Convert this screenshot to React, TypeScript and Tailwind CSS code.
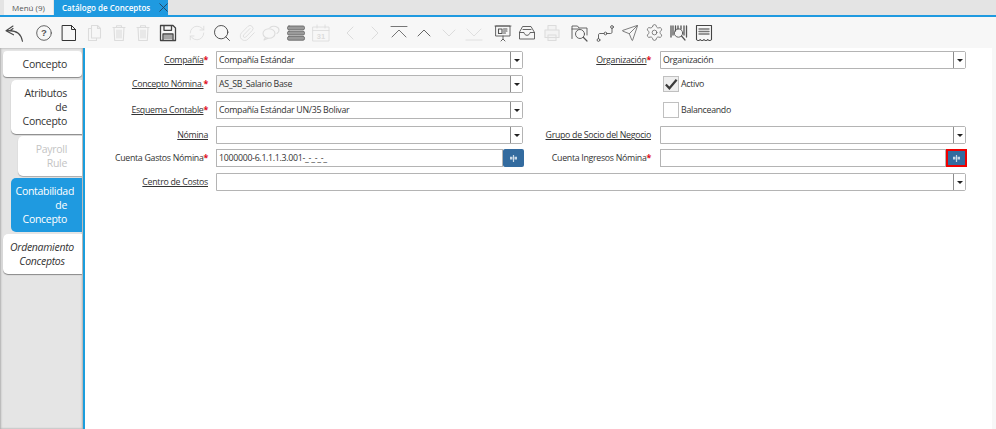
/**
 * Catalogo de Conceptos window: tab strip, toolbar, side tabs and form.
 */
import React from 'react'
import { ChevronLeft, ChevronRight, ChevronUp, ChevronDown, RefreshCw, Search, Paperclip, Settings, Send } from 'lucide-react'

const DARK = '#555555'
const OFF = '#dcdcdc'

function Svg({ children, color = DARK, w = 1 }: { children: React.ReactNode; color?: string; w?: number }) {
  return (
    <svg width="20" height="20" viewBox="0 0 20 20" fill="none" stroke={color} strokeWidth={w} strokeLinecap="round" strokeLinejoin="round">
      {children}
    </svg>
  )
}

function Trash() {
  return (
    <Svg color={OFF} w={1.1}>
      <path d="M4 4.500h12M7.500 4.500V2.800h5v1.700M5 4.500l.7 13h8.600l.7-13M8 7v8M10 7v8M12 7v8" />
    </Svg>
  )
}

const groups: React.ReactNode[][] = [
  [
    <Svg w={1.1} color="#4a4a4a">
      <path d="M9 3 2 7.800l7.500 4M2.500 7.800c8-.8 14.500 2 16 10.500M9 5.500C8 6.500 7 7 5.500 7.800" />
    </Svg>,
  ],
  [
    <Svg w={0.9}>
      <circle cx="10" cy="10" r="7.300" />
      <text x="10" y="13.300" textAnchor="middle" fontSize="9.500" fontWeight="700" fill={DARK} stroke="none" fontFamily="Liberation Sans, sans-serif">?</text>
    </Svg>,
    <Svg color="#333333" w={1}>
      <path d="M3.500 2.500h9l4 4v11h-13zM12.500 2.500v4h4" />
    </Svg>,
    <Svg color={OFF} w={1.1}>
      <path d="M7.500 2.500h6l3 3v9.500h-9zM7.500 5.500h-3v12h8V15M13.500 2.500v3h3" />
    </Svg>,
    <Trash />,
    <Trash />,
    <Svg color="#444444" w={1.3}>
      <path d="M2.500 2.500h12.500l2.500 2.500v12.500h-15zM6 2.800v4.500h7.500V2.800M5 17.200v-6.200h10v6.200" />
      <path d="M6 13h8M6 15h8" strokeWidth="0.900" />
    </Svg>,
  ],
  [
    <RefreshCw size={18} color={OFF} strokeWidth={1.1} />,
    <Search size={20} color="#444444" strokeWidth={1.1} />,
    <Paperclip size={18} color={OFF} strokeWidth={1.2} />,
    <Svg color={OFF} w={1.1}>
      <path d="M9 4.500c3.500-2.500 9-1 9 2.700 0 1.500-.8 2.600-2 3.300" />
      <ellipse cx="8" cy="10.500" rx="6" ry="4.800" />
      <path d="M4.500 14.500 3 17l4-1.800" />
    </Svg>,
    <Svg color="#6a6a6a" w={0.9}>
      <rect x="1.500" y="3" width="17" height="3.800" rx="1.500" fill="#9a9a9a" />
      <rect x="1.500" y="8.200" width="17" height="3.800" rx="1.500" fill="#9a9a9a" />
      <rect x="1.500" y="13.400" width="17" height="3.800" rx="1.500" fill="#9a9a9a" />
    </Svg>,
    <Svg color={OFF} w={0.9}>
      <path d="M2 4h16v14H2zM2 7.500h16M6 2v3M14 2v3" />
      <text x="10" y="15.800" textAnchor="middle" fontSize="7.500" fontWeight="700" fill={OFF} stroke="none" fontFamily="Liberation Sans, sans-serif">31</text>
    </Svg>,
  ],
  [
    <ChevronLeft size={24} color={OFF} strokeWidth={1} />,
    <ChevronRight size={24} color={OFF} strokeWidth={1} />,
    <Svg color="#666666" w={0.9}>
      <path d="M2 3.500h16M3 14l7-7 7 7" />
    </Svg>,
    <ChevronUp size={24} color="#666666" strokeWidth={1} />,
    <ChevronDown size={24} color={OFF} strokeWidth={1} />,
    <Svg color={OFF} w={0.9}>
      <path d="M2 17h16M3 6l7 7 7-7" />
    </Svg>,
  ],
  [
    <Svg color="#555555" w={0.9}>
      <path d="M3 3h14v10H3zM2 3h16M10 13v3M8 18l2-2 2 2" />
      <path d="M5.500 6h3.500v4.500H5.500zM10.500 6h3.500M10.500 8h3.500M10.500 10h2" strokeWidth="1.100" />
    </Svg>,
    <Svg color="#555555" w={0.9}>
      <path d="M6 3.500h8l3.500 6v6.500h-15V9.500zM2.500 9.500h4.500c.5 2 1.500 2.800 3 2.800s2.500-.8 3-2.800h4.500M6 6.500h8" />
    </Svg>,
    <Svg color={OFF} w={1.1}>
      <path d="M6 7V2.500h8V7M3 7h14v7.500H3zM6 12h8v5.500H6z" fill="#f3f3f3" />
    </Svg>,
  ],
  [
    <Svg color="#555555" w={0.9}>
      <path d="M2 15.500V3h5.500l1.500 2h8v7" />
      <path d="M2 6h7" />
      <circle cx="10" cy="11" r="4.500" />
      <path d="m13.500 14.500 3.500 3.500" strokeWidth="1.200" />
    </Svg>,
    <Svg color="#555555" w={0.9}>
      <circle cx="3.500" cy="17" r="1.400" />
      <circle cx="10.500" cy="10.500" r="1.400" />
      <circle cx="17" cy="4" r="1.400" />
      <path d="M3.500 15.500v-3.500c0-1 .5-1.500 1.500-1.500h4M12 10.500h3.500c1 0 1.500-.5 1.500-1.500V5.500" />
    </Svg>,
    <Send size={18} color="#555555" strokeWidth={1} />,
    <Settings size={19} color="#666666" strokeWidth={1} />,
    <Svg color="#555555" w={0.9}>
      <path d="M2 3v11M4 3v9M6.500 3v5M9 3v3M12 3v3M15 3v9M17.500 3v11" strokeWidth="1.300" />
      <circle cx="9.500" cy="10" r="4.200" />
      <path d="m12.500 13 3.500 4" strokeWidth="1.200" />
    </Svg>,
    <Svg color="#444444" w={1.1}>
      <path d="M2.500 2.500h15v14c-1.200 1.400-2.500 1.400-3.700 0-1.200 1.400-2.500 1.400-3.800 0-1.300 1.400-2.600 1.400-3.800 0-1.200 1.400-2.500 1.400-3.700 0z" />
      <path d="M5 6h10M5 8.500h10M5 11h10" strokeWidth="1.400" stroke="#777777" />
    </Svg>,
  ],
]

const groupGaps = ['ml-0', 'ml-[5px]', 'ml-[4px]', 'ml-[4px]', 'ml-[4px]', 'ml-[3px]']

function Toolbar() {
  return (
    <div className="flex items-center h-[31px] pl-[2px] bg-[#f7f7f7]">
      {groups.map((icons, g) => (
        <div key={g} className={`flex ${groupGaps[g]}`}>
          {icons.map((icon, i) => (
            <div key={i} className="w-[24.800px] h-[24px] flex items-center justify-center">
              {icon}
            </div>
          ))}
        </div>
      ))}
    </div>
  )
}

function SideTabs() {
  return (
    <div className="w-[83px] shrink-0 pt-[3px] bg-[#e5e5e5] shadow-[inset_1px_0_2px_#b0b0b0,inset_-1px_0_2px_#b0b0b0] text-[10.500px] tracking-[-0.3px] leading-[14px] text-[#333]">
      <div className="ml-[3px] mr-[1px] h-[26px] flex items-center justify-end pr-[15px] bg-white rounded-[4px] shadow-[0_1px_1px_#888]">Concepto</div>
      <div className="ml-[11px] mr-[1px] mt-[3px] h-[54px] pt-[6px] pr-[15px] text-right bg-white rounded-l-[5px] shadow-[0_1px_1px_#888]">
        Atributos
        <br />
        de
        <br />
        Concepto
      </div>
      <div className="ml-[18px] mr-[1px] mt-[2px] h-[40px] pt-[6px] pr-[15px] text-right text-[#c4c4c4] bg-white rounded-l-[5px] shadow-[0_1px_1px_#aaa]">
        Payroll
        <br />
        Rule
      </div>
      <div className="ml-[11px] mr-[1px] mt-[2px] h-[54px] pt-[6px] pr-[15px] text-right text-white bg-[#1f9ae0] rounded-l-[5px]">
        <span className="block -mr-[7px]">Contabilidad</span>
        de
        <br />
        Concepto
      </div>
      <div className="ml-[3px] mr-[1px] mt-[2px] h-[40px] pt-[6px] pr-[1px] text-center italic bg-white rounded-l-[5px] shadow-[0_1px_1px_#888]">
        Ordenamiento
        <br />
        Conceptos
      </div>
    </div>
  )
}

function Label({ text, req, link = true, pr }: { text: string; req?: boolean; link?: boolean; pr: string }) {
  return (
    <div className={`h-[18px] pt-[2px] flex items-center justify-end whitespace-nowrap ${pr}`}>
      <span className={link ? 'underline' : ''}>{text}</span>
      {req && <span className="text-[#e0101a] font-bold">*</span>}
    </div>
  )
}

function Select({ value, readOnly }: { value?: string; readOnly?: boolean }) {
  return (
    <div className={`h-[18px] flex items-stretch border border-[#b4b4b4] rounded-r-[2px] ${readOnly ? 'bg-[#f3f3f3]' : 'bg-white'}`}>
      <div className="flex-1 pl-[2px] pt-[1px] flex items-center whitespace-nowrap overflow-hidden">{value}</div>
      <div className="w-[12px] bg-white border-l border-[#8c8c8c] flex items-center justify-center">
        <div className="w-0 h-0 border-x-[3px] border-x-transparent border-t-[3px] border-t-[#222]" />
      </div>
    </div>
  )
}

function LookupIcon() {
  return (
    <svg width="7" height="7" viewBox="0 0 8 8" fill="#c9d9e8">
      <path d="M3.300 0h1.400v8H3.300zM0 2h2.800v3H0zM5.200 2H8v3H5.200z" />
    </svg>
  )
}

function Check({ label, checked }: { label: string; checked?: boolean }) {
  return (
    <div className="h-[18px] pl-[3px] flex items-center gap-[2px]">
      <div className={`w-[16px] h-[16px] border border-[#c0c0c0] flex items-center justify-center ${checked ? 'bg-[#eeeeee]' : 'bg-white'}`}>
        {checked && (
          <svg width="15" height="13" viewBox="0 0 15 13" fill="none" stroke="#3a3a3a" strokeWidth="2.400">
            <path d="M2 6.500l3.800 4L13.500 1.500" />
          </svg>
        )}
      </div>
      <span className="pt-[2px]">{label}</span>
    </div>
  )
}

function Form() {
  return (
    <div className="grid grid-cols-[131px_307px_137px_306px] grid-rows-[24px_26px_25px_23px_24px_18px] pt-[3px] text-[8.800px] tracking-[-0.3px] text-[#333]">
      <Label text="Compañía" req pr="pr-[8px]" />
      <Select value="Compañía Estándar" />
      <Label text="Organización" req pr="pr-[9px]" />
      <Select value="Organización" />

      <Label text="Concepto Nómina." req pr="pr-[8px]" />
      <Select value="AS_SB_Salario Base" readOnly />
      <div />
      <Check label="Activo" checked />

      <Label text="Esquema Contable" req pr="pr-[8px]" />
      <Select value="Compañía Estándar UN/35 Bolivar" />
      <div />
      <Check label="Balanceando" />

      <Label text="Nómina" pr="pr-[8px]" />
      <Select />
      <Label text="Grupo de Socio del Negocio" pr="pr-[9px]" />
      <Select />

      <Label text="Cuenta Gastos Nómina" req link={false} pr="pr-[8px]" />
      <div className="flex h-[18px]">
        <div className="flex-1 border border-[#b4b4b4] pl-[2px] pt-[1px] flex items-center">1000000-6.1.1.1.3.001-_-_-_-_</div>
        <div className="w-[21px] -mr-[1px] bg-[#336b9f] rounded-[2px] flex items-center justify-center">
          <LookupIcon />
        </div>
      </div>
      <Label text="Cuenta Ingresos Nómina" req link={false} pr="pr-[9px]" />
      <div className="flex h-[18px]">
        <div className="flex-1 border border-[#b4b4b4]" />
        <div className="w-[21px] -mr-[1px] bg-[#336b9f] border-2 border-[#f00000] flex items-center justify-center">
          <LookupIcon />
        </div>
      </div>

      <Label text="Centro de Costos" pr="pr-[8px]" />
      <div className="col-span-3">
        <Select />
      </div>
    </div>
  )
}

export default function App() {
  return (
    <div className="w-[996px] h-[429px] flex flex-col overflow-hidden bg-white font-['Open_Sans',sans-serif]">
      <div className="h-[17px] shrink-0 flex items-stretch pl-[4px] bg-[#e4e4e4] border-b-2 border-[#1f9ae0] box-border text-[8px] leading-[15px] whitespace-nowrap">
        <div className="w-[49px] pl-[8px] bg-[#f5f5f5] text-[#555]">Menú (9)</div>
        <div className="ml-[1px] w-[114px] pl-[8px] flex items-center bg-[#1f9ae0] text-white font-semibold">
          <span className="w-[97px] shrink-0">Catálogo de Conceptos</span>
          <svg width="9" height="9" viewBox="0 0 9 9" stroke="#24415c" strokeWidth="0.900">
            <path d="M.5.500l8 8M8.500.500l-8 8" />
          </svg>
        </div>
      </div>
      <Toolbar />
      <div className="flex-1 flex min-h-0">
        <SideTabs />
        <div className="flex-1 flex border-l-2 border-[#1a9ddc]">
          <div className="flex-1">
            <Form />
          </div>
          <div className="w-[4px] bg-[#f7f7f7]" />
        </div>
      </div>
    </div>
  )
}
